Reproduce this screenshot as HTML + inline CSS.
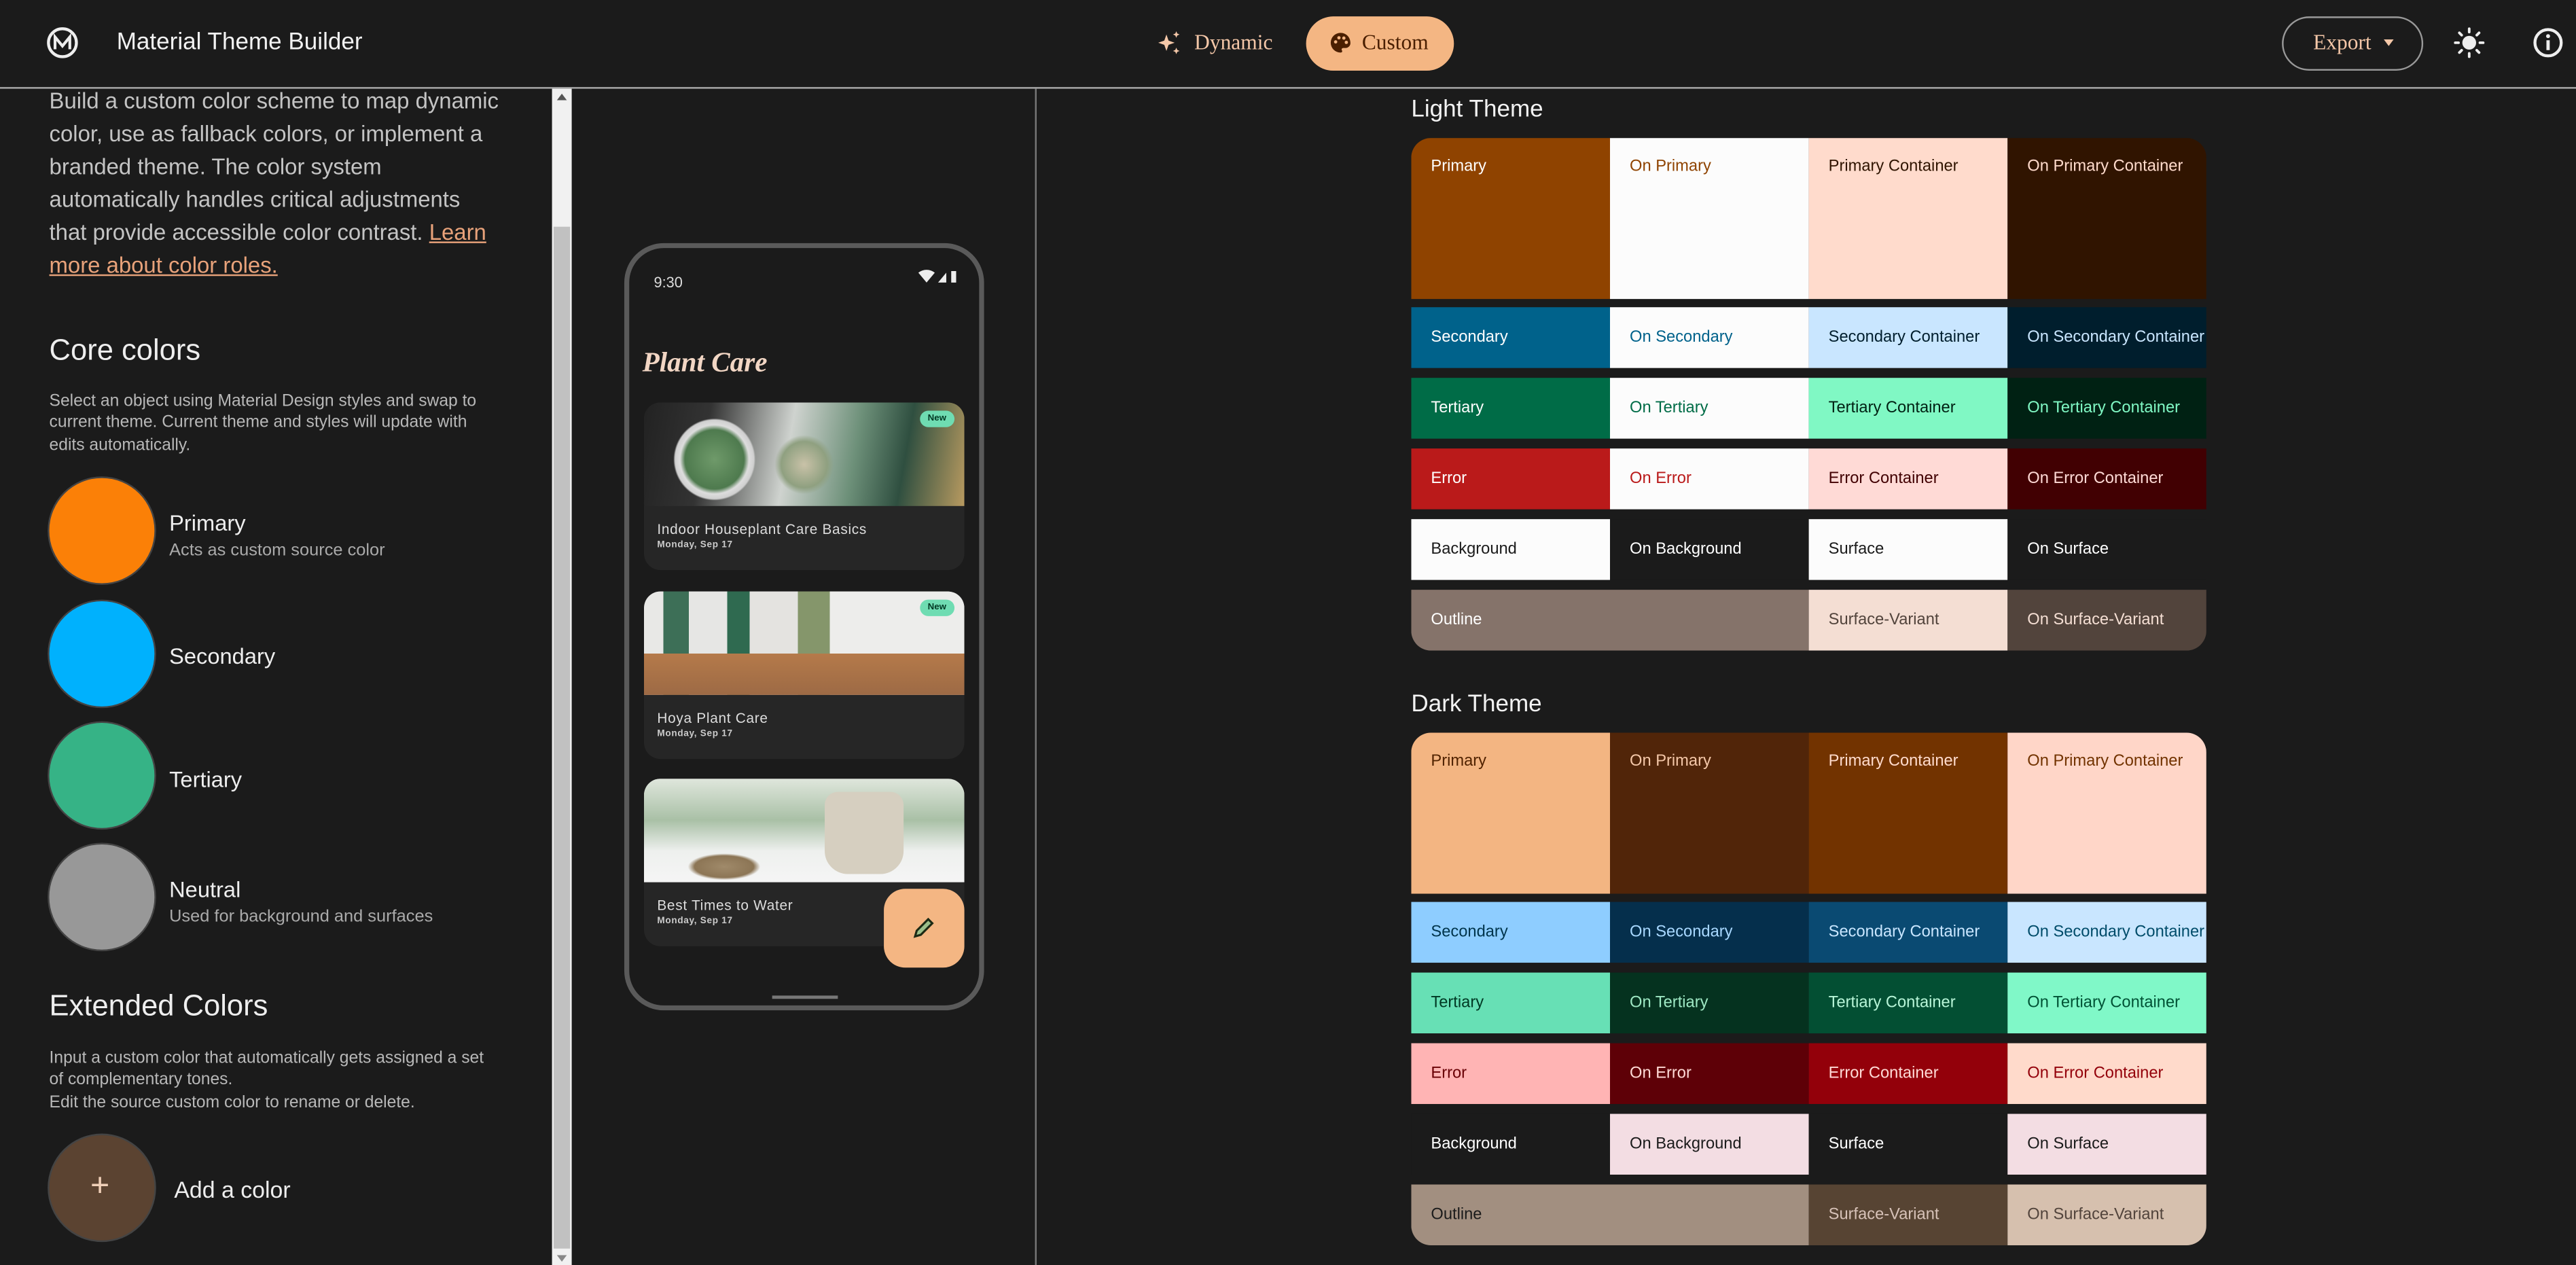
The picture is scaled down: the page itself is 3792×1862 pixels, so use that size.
<!DOCTYPE html>
<html><head><meta charset="utf-8"><style>
html,body{margin:0;padding:0;background:#1b1b1b;overflow:hidden}
#s{position:absolute;left:0;top:0;width:1568px;height:770px;transform:scale(2.41837,2.41818);transform-origin:0 0;background:#1b1b1b;font-family:"Liberation Sans",sans-serif;color:#e6e6e6;overflow:hidden}
.a{position:absolute}
.hl{left:0;top:53px;width:1568px;height:1px;background:#aaa}
.lt{left:30px;top:52px;width:300px;font-size:13.6px;line-height:20px;color:#c4c4c4;white-space:nowrap}
.lt u{color:#e8a27a}
.h2{font-size:18px;color:#eee}
.sm{font-size:10.2px;line-height:13.4px;color:#b8b8b8;white-space:nowrap}
.cir{width:64px;height:64px;border-radius:50%;left:30px;box-shadow:0 0 0 1px #444}
.lab{left:103px;font-size:13.5px;color:#eee}
.lab div{font-size:10.5px;color:#aaa;margin-top:3px}
.tbl{left:859px;width:484px;border-radius:12px;overflow:hidden}
.row{display:flex;height:37px;margin-bottom:6px}
.row:last-child{margin-bottom:0}
.row.big{height:98px;margin-bottom:5px}
.c{flex:0 0 121px;width:121px;font-size:9.8px;padding:12px 0 0 12px;box-sizing:border-box;white-space:nowrap;overflow:hidden}
.row:not(.big) .c{padding-top:13px}
.c2{flex:0 0 242px;width:242px}
.phone{left:380px;top:148px;width:213px;height:461px;border:3px solid #5a5a5a;border-radius:24px;background:#1b1b1b}
.card{left:392px;width:195px;height:102px;border-radius:10px;overflow:hidden;background:#262626}
.img{height:63px;position:relative}
.ct{position:absolute;left:8px;top:72px;font-size:8.6px;color:#ddd;letter-spacing:.3px}
.cd{position:absolute;left:8px;top:84px;font-size:5.6px;font-weight:bold;color:#ccc;letter-spacing:.3px}
.new{position:absolute;right:6px;top:5px;background:#6fdcb2;color:#003823;font-size:5.5px;font-weight:bold;border-radius:6px;padding:2px 5px}
</style></head><body><div id="s">
<svg class="a" style="left:28px;top:16px" width="20" height="20" viewBox="0 0 20 20"><circle cx="10" cy="10" r="8.5" fill="none" stroke="#eee" stroke-width="1.8"/><path d="M5.5 14V6.5L10 12l4.5-5.5V14" fill="none" stroke="#eee" stroke-width="1.7"/></svg>
<div class="a" style="left:71px;top:18px;font-size:14.5px;color:#f2f2f2">Material Theme Builder</div>
<svg class="a" style="left:704px;top:18px" width="16" height="16" viewBox="0 0 16 16"><path d="M6 3l1.3 3.7L11 8 7.3 9.3 6 13 4.7 9.3 1 8l3.7-1.3z" fill="#f4c7a8"/><path d="M12 1l.6 1.4L14 3l-1.4.6L12 5l-.6-1.4L10 3l1.4-.6zM12 11l.6 1.4 1.4.6-1.4.6L12 15l-.6-1.4L10 13l1.4-.6z" fill="#f4c7a8"/></svg>
<div class="a" style="left:727px;top:18px;font-family:'Liberation Serif',serif;font-size:13px;color:#f4c7a8">Dynamic</div>
<div class="a" style="left:795px;top:10px;width:90px;height:33px;border-radius:17px;background:#f4b683"></div>
<svg class="a" style="left:809px;top:19px" width="14" height="14" viewBox="0 0 14 14"><path d="M7 1a6 6 0 0 0 0 12c1 0 1.2-.8.8-1.4-.4-.6 0-1.4.8-1.4H10a3 3 0 0 0 3-3C13 3.6 10.3 1 7 1z" fill="#4a1f00"/><circle cx="4" cy="6.5" r="1" fill="#f4b683"/><circle cx="6" cy="4" r="1" fill="#f4b683"/><circle cx="9" cy="4.2" r="1" fill="#f4b683"/><circle cx="10.5" cy="6.8" r="1" fill="#f4b683"/></svg>
<div class="a" style="left:829px;top:18px;font-family:'Liberation Serif',serif;font-size:13px;color:#4a1f00">Custom</div>
<div class="a" style="left:1389px;top:10px;width:84px;height:31px;border-radius:17px;border:1px solid #999"></div>
<div class="a" style="left:1408px;top:18px;font-family:'Liberation Serif',serif;font-size:13px;color:#f4c7a8">Export</div>
<div class="a" style="left:1451px;top:24px;width:0;height:0;border-left:3px solid transparent;border-right:3px solid transparent;border-top:4px solid #f4c7a8"></div>
<svg class="a" style="left:1493px;top:16px" width="20" height="20" viewBox="0 0 20 20"><circle cx="10" cy="10" r="4.2" fill="#eee"/><g stroke="#eee" stroke-width="1.6" stroke-linecap="round"><path d="M10 1.5v2M10 16.5v2M1.5 10h2M16.5 10h2M4 4l1.4 1.4M14.6 14.6L16 16M4 16l1.4-1.4M14.6 5.4L16 4"/></g></svg>
<svg class="a" style="left:1541px;top:16px" width="20" height="20" viewBox="0 0 20 20"><circle cx="10" cy="10" r="8" fill="none" stroke="#eee" stroke-width="1.8"/><rect x="9" y="8.5" width="2" height="6" fill="#eee"/><circle cx="10" cy="6" r="1.2" fill="#eee"/></svg>
<div class="a hl"></div>
<div class="a lt">Build a custom color scheme to map dynamic<br>color, use as fallback colors, or implement a<br>branded theme. The color system<br>automatically handles critical adjustments<br>that provide accessible color contrast. <u>Learn</u><br><u>more about color roles.</u></div>
<div class="a h2" style="left:30px;top:203px">Core colors</div>
<div class="a sm" style="left:30px;top:238px">Select an object using Material Design styles and swap to<br>current theme. Current theme and styles will update with<br>edits automatically.</div>
<div class="a cir" style="top:291px;background:#fb8007"></div>
<div class="a lab" style="top:311px">Primary<div>Acts as custom source color</div></div>
<div class="a cir" style="top:366px;background:#00b1fd"></div>
<div class="a lab" style="top:392px">Secondary</div>
<div class="a cir" style="top:440px;background:#36b386"></div>
<div class="a lab" style="top:467px">Tertiary</div>
<div class="a cir" style="top:514px;background:#989898"></div>
<div class="a lab" style="top:534px">Neutral<div>Used for background and surfaces</div></div>
<div class="a h2" style="left:30px;top:602px">Extended Colors</div>
<div class="a sm" style="left:30px;top:638px">Input a custom color that automatically gets assigned a set<br>of complementary tones.<br>Edit the source custom color to rename or delete.</div>
<div class="a cir" style="top:691px;background:#5b4331"></div>
<div class="a" style="left:55px;top:711px;font-size:20px;color:#f0d0b8">+</div>
<div class="a" style="left:106px;top:716px;font-size:14px;color:#eee">Add a color</div>
<div class="a" style="left:336px;top:54px;width:12px;height:716px;background:#f1f1f1"></div>
<div class="a" style="left:337px;top:138px;width:10px;height:622px;background:#c1c1c1"></div>
<div class="a" style="left:339px;top:57px;width:0;height:0;border-left:3px solid transparent;border-right:3px solid transparent;border-bottom:4px solid #555"></div>
<div class="a" style="left:339px;top:764px;width:0;height:0;border-left:3px solid transparent;border-right:3px solid transparent;border-top:4px solid #888"></div>
<div class="a" style="left:630px;top:54px;width:1px;height:716px;background:#777"></div>
<div class="a phone"></div>
<div class="a" style="left:398px;top:167px;font-size:9px;color:#ddd">9:30</div>
<svg class="a" style="left:558px;top:164px" width="26" height="9" viewBox="0 0 26 9"><path d="M1 2a8 8 0 0 1 10 0L6 8z" fill="#eee"/><path d="M13 8L18 2v6z" fill="#eee"/><rect x="21" y="1" width="3" height="7" fill="#eee"/></svg>
<div class="a" style="left:391px;top:211px;font-family:'Liberation Serif',serif;font-weight:bold;font-style:italic;font-size:17px;color:#f2d6c4">Plant Care</div>
<div class="a card" style="top:245px"><div class="img" style="background:radial-gradient(circle at 22% 55%,#6f9a6a 0,#4e7a4e 18px,#ddd 21px,#cfcfcf 24px,transparent 25px),radial-gradient(circle at 50% 60%,#c9c2a8 0,#8fa080 14px,transparent 18px),linear-gradient(100deg,#222 0,#333 20%,#cfd3cf 45%,#6d9079 65%,#2f4f40 80%,#b89a60 100%)"></div><div class="new">New</div><div class="ct">Indoor Houseplant Care Basics</div><div class="cd">Monday, Sep 17</div></div>
<div class="a card" style="top:360px"><div class="img" style="background:linear-gradient(180deg,transparent 60%,#b57a4a 60%,#9d6a45 100%),linear-gradient(90deg,#e8e8e6 0,#e8e8e6 6%,#3d6f57 6%,#3d6f57 14%,#e6e6e4 14%,#e6e6e4 26%,#2f6a50 26%,#2f6a50 33%,#e4e3e0 33%,#e4e3e0 48%,#85966b 48%,#85966b 58%,#ededeb 58%,#ededeb 100%)"></div><div class="new">New</div><div class="ct">Hoya Plant Care</div><div class="cd">Monday, Sep 17</div></div>
<div class="a card" style="top:474px"><div class="img" style="background:radial-gradient(ellipse at 25% 85%,#a08a6a 0,#8c7555 18px,transparent 22px),linear-gradient(180deg,#dfe6dc 0,#a9c0a6 40%,#eef0ee 70%,#f5f5f5 100%),#ccc"><div style="position:absolute;left:110px;top:8px;width:48px;height:50px;background:#d6cfc0;border-radius:8px 8px 14px 14px"></div></div><div class="ct">Best Times to Water</div><div class="cd">Monday, Sep 17</div></div>
<div class="a" style="left:538px;top:541px;width:49px;height:48px;border-radius:13px;background:#f4b683"></div>
<svg class="a" style="left:555px;top:557px" width="15" height="15" viewBox="0 0 15 15"><path d="M2 13l1-3.5 7-7 2.5 2.5-7 7z" fill="#9bbf8a" stroke="#1d2a14" stroke-width="1.3"/></svg>
<div class="a" style="left:470px;top:606px;width:40px;height:1.5px;background:#777"></div>
<div class="a" style="left:859px;top:59px;font-size:14.5px;color:#f2f2f2">Light Theme</div>
<div class="a tbl" style="top:84px">
<div class="row big"><div class="c" style="background:#8f4300;color:#fff">Primary</div><div class="c" style="background:#fcfcfc;color:#8f4300">On Primary</div><div class="c" style="background:#ffdbcc;color:#2f1400">Primary Container</div><div class="c" style="background:#301400;color:#ffdbcc">On Primary Container</div></div>
<div class="row"><div class="c" style="background:#00628b;color:#fff">Secondary</div><div class="c" style="background:#fcfcfc;color:#00628b">On Secondary</div><div class="c" style="background:#c9e6ff;color:#001e2d">Secondary Container</div><div class="c" style="background:#001e2d;color:#c9e6ff">On Secondary Container</div></div>
<div class="row"><div class="c" style="background:#006c47;color:#fff">Tertiary</div><div class="c" style="background:#fcfcfc;color:#006c47">On Tertiary</div><div class="c" style="background:#80f8c4;color:#002113">Tertiary Container</div><div class="c" style="background:#002113;color:#80f8c4">On Tertiary Container</div></div>
<div class="row"><div class="c" style="background:#ba1a1a;color:#fff">Error</div><div class="c" style="background:#fcfcfc;color:#ba1a1a">On Error</div><div class="c" style="background:#ffdad6;color:#410002">Error Container</div><div class="c" style="background:#410002;color:#ffdad6">On Error Container</div></div>
<div class="row"><div class="c" style="background:#fcfcfc;color:#1b1b1b">Background</div><div class="c" style="background:#1b1b1b;color:#fff">On Background</div><div class="c" style="background:#fcfcfc;color:#1b1b1b">Surface</div><div class="c" style="background:#1b1b1b;color:#fff">On Surface</div></div>
<div class="row"><div class="c c2" style="background:#85736a;color:#fff">Outline</div><div class="c" style="background:#f4ded3;color:#52443c">Surface-Variant</div><div class="c" style="background:#52443c;color:#f4ded3">On Surface-Variant</div></div>
</div>
<div class="a" style="left:859px;top:421px;font-size:14.5px;color:#f2f2f2">Dark Theme</div>
<div class="a tbl" style="top:446px">
<div class="row big"><div class="c" style="background:#f3b582;color:#512300">Primary</div><div class="c" style="background:#512509;color:#f4c7a8">On Primary</div><div class="c" style="background:#723300;color:#ffdbcc">Primary Container</div><div class="c" style="background:#ffd6c8;color:#723300">On Primary Container</div></div>
<div class="row"><div class="c" style="background:#8ecdff;color:#00344b">Secondary</div><div class="c" style="background:#052f4c;color:#a8d8ff">On Secondary</div><div class="c" style="background:#0a4a72;color:#c9e6ff">Secondary Container</div><div class="c" style="background:#c9e6ff;color:#004c6a">On Secondary Container</div></div>
<div class="row"><div class="c" style="background:#67e0b5;color:#003823">Tertiary</div><div class="c" style="background:#05321f;color:#9ee8c4">On Tertiary</div><div class="c" style="background:#034f33;color:#b8f5d8">Tertiary Container</div><div class="c" style="background:#80f8c8;color:#005235">On Tertiary Container</div></div>
<div class="row"><div class="c" style="background:#ffb4b4;color:#690005">Error</div><div class="c" style="background:#5e0007;color:#ffdad6">On Error</div><div class="c" style="background:#93000a;color:#ffdad6">Error Container</div><div class="c" style="background:#ffdacb;color:#93000a">On Error Container</div></div>
<div class="row"><div class="c" style="background:#1b1b1b;color:#fff">Background</div><div class="c" style="background:#f3dde3;color:#1b1b1b">On Background</div><div class="c" style="background:#1b1b1b;color:#fff">Surface</div><div class="c" style="background:#f3dde3;color:#1b1b1b">On Surface</div></div>
<div class="row"><div class="c c2" style="background:#a28f80;color:#1b1b1b">Outline</div><div class="c" style="background:#574433;color:#d7c2b8">Surface-Variant</div><div class="c" style="background:#d6c0ae;color:#52443c">On Surface-Variant</div></div>
</div>
</div></body></html>
